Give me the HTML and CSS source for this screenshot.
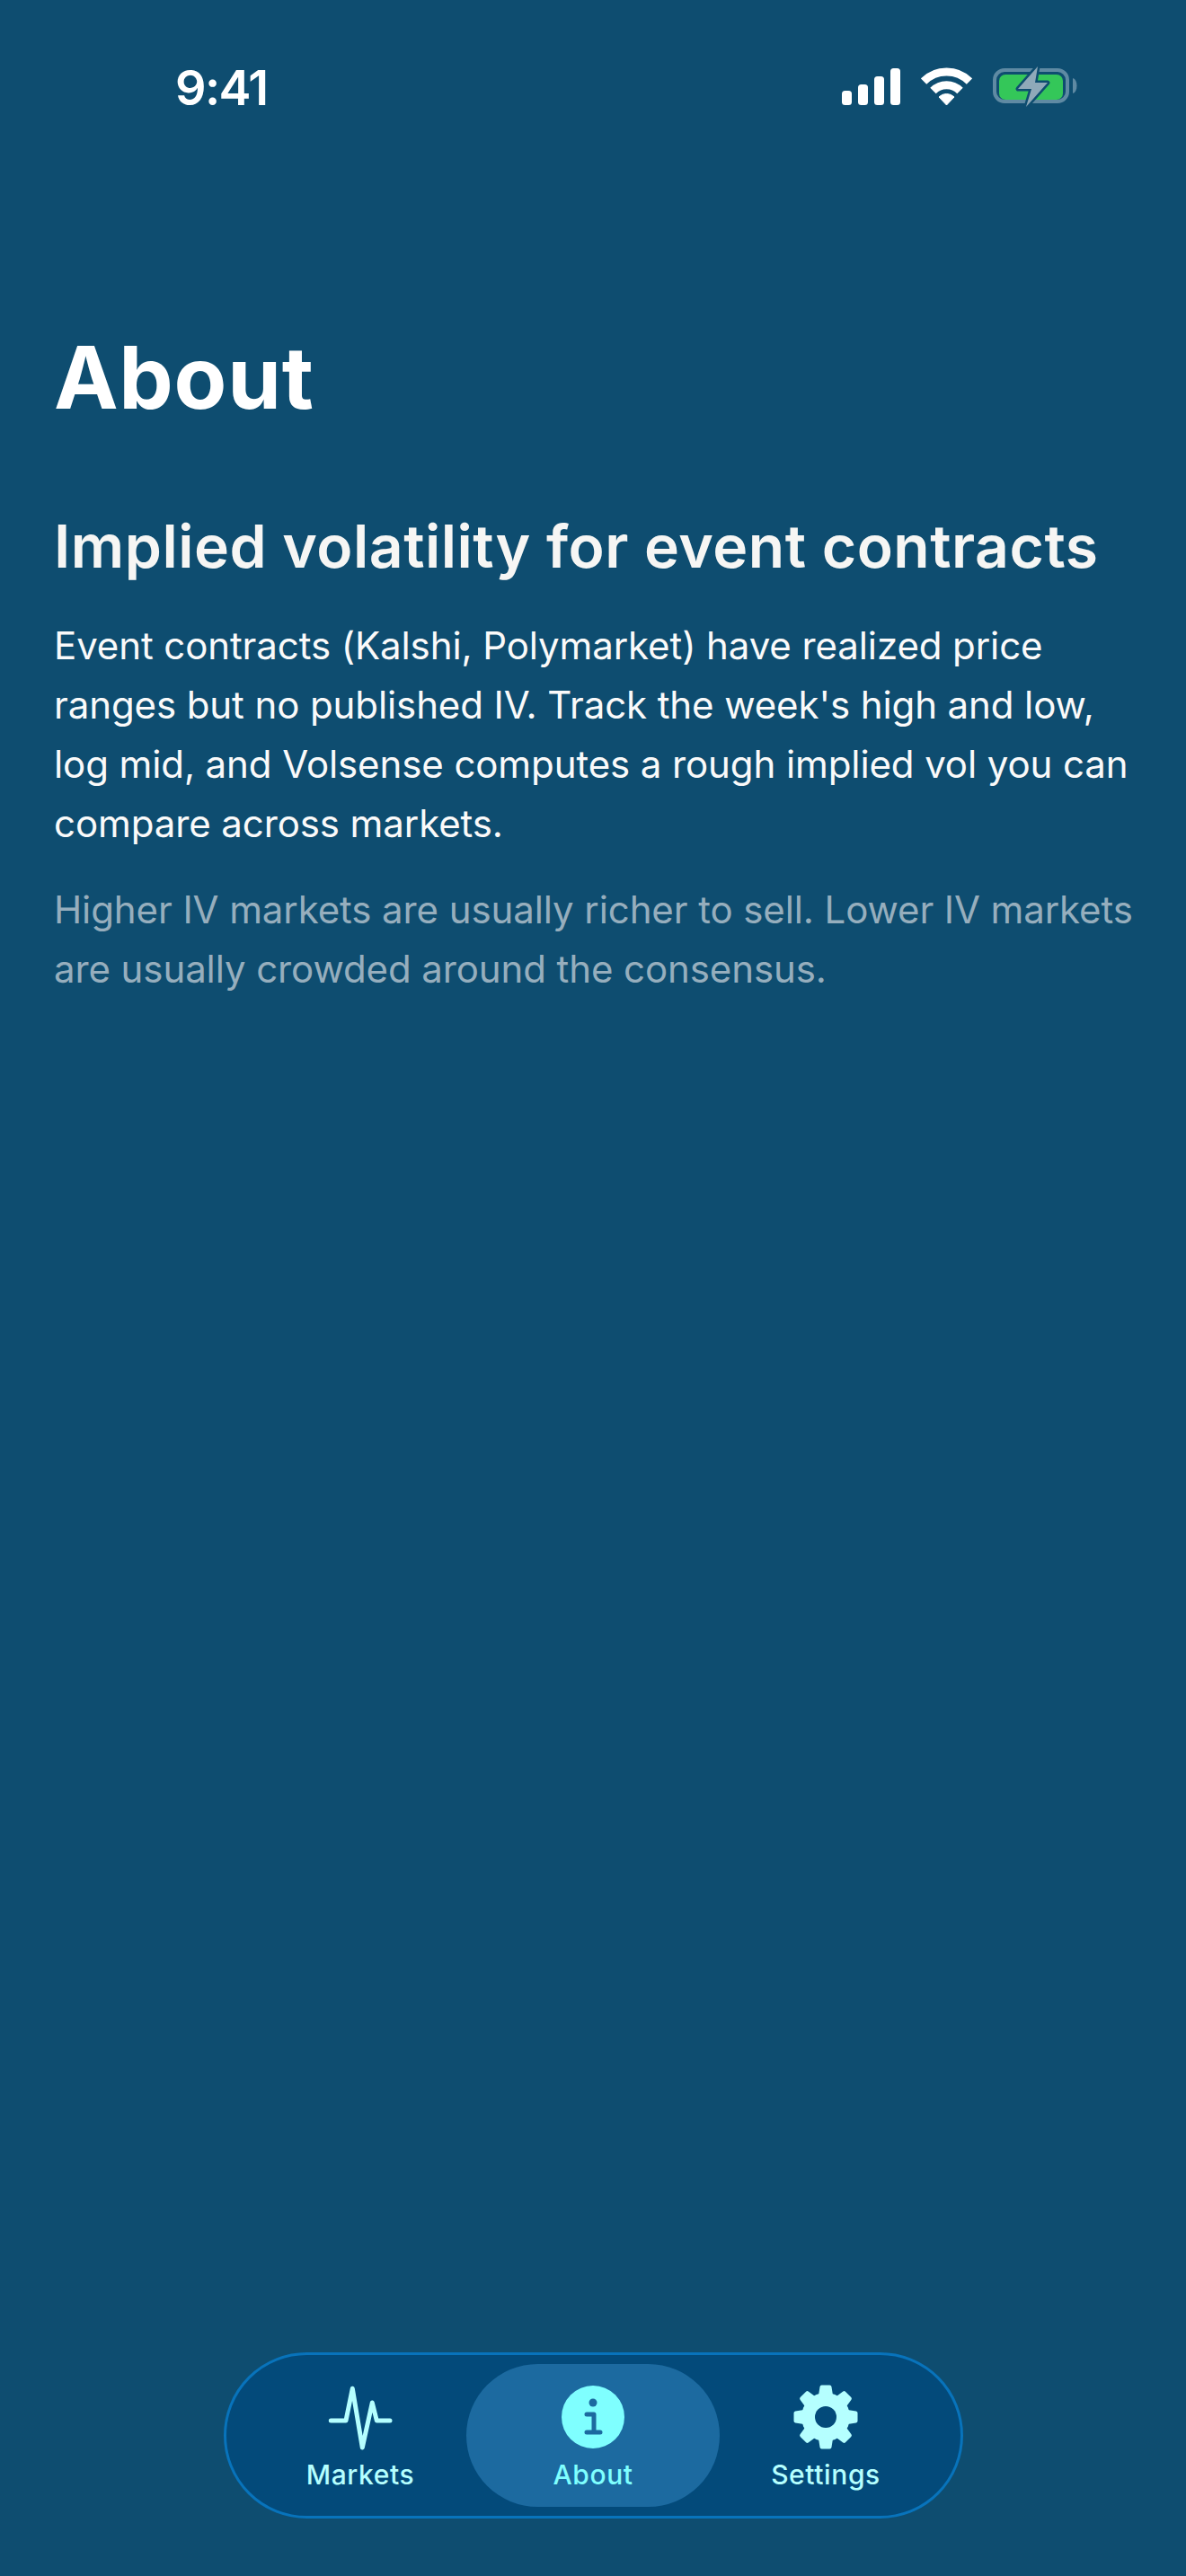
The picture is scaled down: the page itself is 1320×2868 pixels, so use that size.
FILE: index.html
```html
<!DOCTYPE html>
<html lang="en">
<head>
<meta charset="utf-8">
<title>About</title>
<link rel="stylesheet" href="styles.css">
</head>
<body>
<div class="screen">
  <header class="status">
    <span class="time">9:41</span>
    <div class="status-icons">
      <svg class="signal" width="65" height="41" viewBox="0 0 65 41"><rect x="0" y="25" width="11" height="16" rx="3.5"/><rect x="18" y="18" width="11" height="23" rx="3.5"/><rect x="36" y="9" width="11" height="32" rx="3.5"/><rect x="54" y="0" width="11" height="41" rx="3.5"/></svg>
      <svg class="wifi" width="57" height="42" viewBox="0 0 57 42"><path class="arc" d="M3 15.5A36 36 0 0 1 54 15.5"/><path class="arc" d="M13.5 26A21 21 0 0 1 43.5 26"/><path class="fan" d="M20 33A12 12 0 0 1 37 33L28.5 42Z"/></svg>
      <svg class="battery" width="95" height="47" viewBox="0 0 95 47"><rect class="b-out" x="2" y="6" width="81" height="35" rx="11"/><path class="b-cap" d="M89 15c3 1 4.500 4 4.500 8.500s-1.500 7.500-4.500 8.500Z"/><rect class="b-fill" x="7" y="11" width="71" height="28" rx="7"/><path class="b-bolt" d="M50 2L28 27H43L37 47L61 20H47Z"/></svg>
    </div>
  </header>
  <main class="content">
    <h1 class="title">About</h1>
    <h2 class="heading">Implied volatility for event contracts</h2>
    <p class="lead">Event contracts (Kalshi, Polymarket) have realized price ranges but no published IV. Track the week's high and low, log mid, and Volsense computes a rough implied vol you can compare across markets.</p>
    <p class="note">Higher IV markets are usually richer to sell. Lower IV markets are usually crowded around the consensus.</p>
  </main>
  <nav class="tabs">
    <div class="tab">
      <svg class="icon" width="72" height="72" viewBox="0 0 72 72"><polyline class="pulse" points="3.300,40 20,40 27.300,4.300 38.300,70 49.300,20 54.300,40 69,40"/></svg>
      <span class="tab-label">Markets</span>
    </div>
    <div class="tab tab-active">
      <svg class="icon" width="72" height="72" viewBox="-36 -36 72 72"><circle class="info-disc" r="35"/><circle class="info-dot" cy="-16" r="4.500"/><path class="info-i" d="M-7-3H1V16M-7 17H8"/></svg>
      <span class="tab-label">About</span>
    </div>
    <div class="tab">
      <svg class="icon" width="72" height="72" viewBox="-36 -36 72 72">
        <defs><path id="tooth" d="M-6-24L-4.500-33.500H4.500L6-24Z"/></defs>
        <circle class="gear" r="27"/>
        <use class="gear-tooth" href="#tooth"/>
        <use class="gear-tooth" href="#tooth" transform="rotate(45)"/>
        <use class="gear-tooth" href="#tooth" transform="rotate(90)"/>
        <use class="gear-tooth" href="#tooth" transform="rotate(135)"/>
        <use class="gear-tooth" href="#tooth" transform="rotate(180)"/>
        <use class="gear-tooth" href="#tooth" transform="rotate(225)"/>
        <use class="gear-tooth" href="#tooth" transform="rotate(270)"/>
        <use class="gear-tooth" href="#tooth" transform="rotate(315)"/>
        <circle class="gear-hole" r="12"/>
      </svg>
      <span class="tab-label">Settings</span>
    </div>
  </nav>
</div>
</body>
</html>
```
FILE: styles.css
```css
* { box-sizing: border-box; }
html, body { margin: 0; padding: 0; }
body { background: #0e4d70; font-family: Inter, "Noto Sans", sans-serif; color: #fff; }
.screen { width: 1320px; height: 2868px; display: flex; flex-direction: column; overflow: hidden; background: #0e4d70; }

.status { display: flex; justify-content: space-between; align-items: flex-start; height: 150px; padding: 68px 120px 0 195px; }
.time { font-size: 54px; line-height: 60px; font-weight: 600; letter-spacing: -1.6px; }
.status-icons { display: flex; align-items: flex-start; padding-top: 1px; }
.signal { fill: #fff; margin-top: 7px; }
.wifi { margin-top: 6px; margin-left: 23px; }
.arc { fill: none; stroke: #fff; stroke-width: 9; }
.fan { fill: #fff; stroke: #fff; stroke-width: 1; stroke-linejoin: round; }
.battery { margin-top: 3px; margin-left: 23px; overflow: visible; }
.b-out { fill: none; stroke: #5f8aa3; stroke-width: 4; }
.b-cap { fill: #5f8aa3; }
.b-fill { fill: #34c759; }
.b-bolt { fill: #8fa9b9; stroke: #0e4d70; stroke-width: 5; paint-order: stroke; stroke-linejoin: round; }

.content { padding: 212px 50px 0 60px; flex: 1; }
.title { margin: 0; font-size: 96px; line-height: 116px; font-weight: 700; letter-spacing: 0.7px; }
.heading { margin: 90px 0 0; font-size: 66px; line-height: 80px; font-weight: 600; letter-spacing: 0.5px; color: #f6f6f4; }
.lead { margin: 38px 0 0; font-size: 42px; line-height: 66px; font-weight: 400; letter-spacing: -0.1px; color: #fafafa; }
.note { margin: 30px 0 0; font-size: 42px; line-height: 66px; font-weight: 400; letter-spacing: -0.1px; color: #96aebd; }

.tabs { align-self: center; margin-bottom: 64px; width: 823px; height: 185px; display: flex; align-items: stretch; justify-content: center; padding: 10px 0; background: #034a7a; border: 3px solid #0873bb; border-radius: 93px; }
.tab { flex: 0 0 236px; display: flex; flex-direction: column; align-items: center; padding-top: 23px; border-radius: 80px; color: #b5ffff; }
.tab-active { flex: 0 0 282px; background: #1c6aa0; color: #7fffff; }
.icon { display: block; overflow: visible; }
.tab-label { margin-top: 10px; font-size: 30px; line-height: 36px; font-weight: 450; letter-spacing: 0.6px; }

.pulse { fill: none; stroke: #b5ffff; stroke-width: 5; stroke-linecap: round; stroke-linejoin: round; }
.info-disc { fill: #7fffff; }
.info-dot { fill: #1c6aa0; }
.info-i { fill: none; stroke: #1c6aa0; stroke-width: 5; stroke-linecap: round; stroke-linejoin: round; }
.gear, .gear-tooth { fill: #b5ffff; }
.gear-tooth { stroke: #b5ffff; stroke-width: 4; stroke-linejoin: round; }
.gear-hole { fill: #034a7a; }
```
